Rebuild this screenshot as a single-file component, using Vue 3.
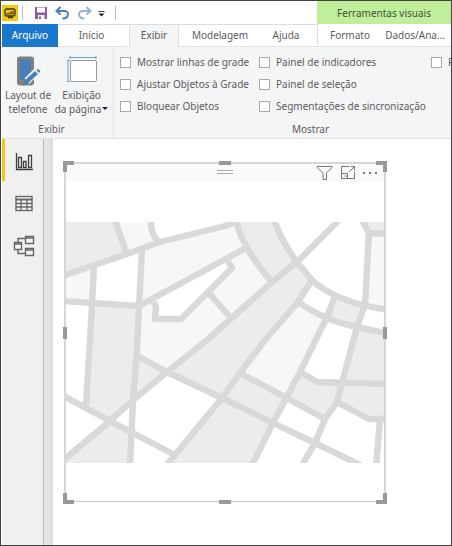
<script setup>
const optionColumns = [
  ['Mostrar linhas de grade', 'Ajustar Objetos à Grade', 'Bloquear Objetos'],
  ['Painel de indicadores', 'Painel de seleção', 'Segmentações de sincronização'],
  ['P'],
]

const darkBlocks = [
  '65,222 115,222 127,254 65,275',
  '92,306 139,306 133,400 110,421 86,405',
  '65,459 110,421 131,432 130,463 65,463',
  '139,357 167,372 133,400',
  '237,222 275,222 284,243 297,262 272,282 255,262 245,247',
  '297,262 312,280 298,302 222,398 167,372',
  '222,398 273,423 253,463 168,463',
  '240,373 287,398 273,423 222,398',
  '300,372 317,382 342,383 337,402 325,418 287,398',
  '335,296 363,306 357,327 327,317',
  '357,327 385,333 385,419 369,419 337,402',
  '363,222 385,222 385,234 369,233',
]

const lightBlocks = [
  '115,222 151,222 159,243 127,254',
  '65,275 94,265 92,304 65,301',
  '142,250 220,226 236,222 245,247 139,306',
  '139,306 154,300 155,319 181,319 232,268 229,257 246,248 272,282 167,372 139,357',
  '369,233 385,234 385,309 365,305',
  '298,302 327,317 300,372 287,398 240,373',
]

const roads = [
  'M60 277L124 255L160 242L225 226L236 222',
  'M114 218L127 254',
  'M151 218V225Q152 235 159 243',
  'M94 265L92 306L86 405',
  'M142 250L139 306L137 350L133 400L130 467',
  'M60 301L139 306L220 262L246 248',
  'M154 302L156 307L155 319L181 319L232 268L228 261',
  'M208 292L229 316',
  'M60 463L110 421L133 400L167 372L207 340L271 283L297 262L341 218',
  'M235 218Q243 250 272 282',
  'M273 218Q283 244 297 262L312 280Q336 303 390 310',
  'M361 218L369 233L390 234',
  'M369 232L365 305L357 327L342 383L337 402L325 419L315 443L301 467',
  'M298 302Q325 321 357 327L390 334',
  'M312 280L298 302L265 340L240 373L222 398L165 467',
  'M335 296L327 317L300 372L273 423L251 467',
  'M139 357L167 372L220 397L273 423L315 443L362 466',
  'M240 373L287 398L325 419',
  'M300 372L317 382L390 384',
  'M337 402L369 419L390 419',
  'M380 419L376 467',
  'M60 394L110 421L173 454',
]

const handles = ['tl', 'tm', 'tr', 'ml', 'mr', 'bl', 'bm', 'br']
</script>

<template>
  <div class="window">
    <header class="titlebar">
      <div class="quick">
        <span class="logo">
          <svg width="16" height="16" viewBox="0 0 16 16" aria-hidden="true">
            <rect x="3" y="4" width="10" height="7" rx="1.500" fill="none" stroke="#3d3517" stroke-width="1.3" />
            <path d="M5 9.5V8M7 9.5V7.5M9 9.5V6.5M11 9.5V6M6 12.500h5" stroke="#3d3517" stroke-width="1.3" />
          </svg>
        </span>
        <span class="rule"></span>
        <button class="tool save" aria-label="Salvar">
          <svg width="14" height="14" viewBox="0 0 14 14">
            <path d="M1 1H13V13H1Z" fill="#8b5bab" />
            <path d="M3 1.500H11V6.500H3ZM4 9H10.500V13H4Z" fill="#fff" />
            <path d="M5 10.500H7V13H5Z" fill="#8b5bab" />
          </svg>
        </button>
        <button class="tool undo" aria-label="Desfazer">
          <svg width="15" height="14" viewBox="0 0 15 14">
            <path d="M5.500 1L1.500 5L5.500 8.500M2 5H9C15 5 14 12.500 7.500 12.500" fill="none" stroke="#4a7fb8" stroke-width="2" />
          </svg>
        </button>
        <button class="tool redo" aria-label="Refazer">
          <svg width="15" height="14" viewBox="0 0 15 14">
            <path d="M9.500 1L13.500 5L9.500 8.500M13 5H6C0 5 1 12.500 7.500 12.500" fill="none" stroke="#9db2cd" stroke-width="2" />
          </svg>
        </button>
        <button class="tool more" aria-label="Personalizar">
          <svg width="7" height="6" viewBox="0 0 7 6">
            <path d="M0.500 .5H6.500" stroke="#444" />
            <path d="M0.500 2.500H6.500L3.500 5.500Z" fill="#222" />
          </svg>
        </button>
        <span class="rule"></span>
      </div>
      <div class="context">Ferramentas visuais</div>
    </header>

    <nav class="tabs">
      <button class="tab file">Arquivo</button>
      <button class="tab home">Início</button>
      <button class="tab active">Exibir</button>
      <button class="tab model">Modelagem</button>
      <button class="tab help">Ajuda</button>
      <div class="context-tabs">
        <button class="tab">Formato</button>
        <button class="tab">Dados/Ana...</button>
      </div>
    </nav>

    <section class="ribbon">
      <div class="group view">
        <div class="commands">
          <button class="command">
            <svg width="26" height="32" viewBox="0 0 26 32" aria-hidden="true">
              <rect x="3.500" y="2" width="14" height="26" rx="1.500" fill="#4a7fb8" stroke="#808080" stroke-width="3" />
              <path d="M3 24H18V28H3Z" fill="#808080" />
              <path d="M9 26H12" stroke="#eee" stroke-width="1.500" />
              <path d="M12 25L23 14" stroke="#f4f5f7" stroke-width="7" />
              <path d="M8 30L9 25L20 15L23 18L12 28Z" fill="#4a7fb8" />
              <path d="M21.500 14L23 13L25.500 15L24 17Z" fill="#4a7fb8" />
            </svg>
            <span>Layout de<br>telefone</span>
          </button>
          <button class="command">
            <svg width="30" height="32" viewBox="0 0 30 32" aria-hidden="true">
              <rect x="3.500" y="4.500" width="26" height="21" rx="1.500" fill="#fff" stroke="#9a9a9a" />
              <path d="M3 1.500H29M3 0V3M29 0V3M1 4V25M0 4.500H3M0 25.500H3" fill="none" stroke="#6d9fd0" />
            </svg>
            <span>Exibição<br>da página<i class="caret"></i></span>
          </button>
        </div>
        <div class="caption">Exibir</div>
      </div>
      <div class="group show">
        <div class="options">
          <div v-for="(column, index) in optionColumns" :key="index" class="option-column">
            <label v-for="option in column" :key="option" class="option">
              <input type="checkbox">
              <span>{{ option }}</span>
            </label>
          </div>
        </div>
        <div class="caption">Mostrar</div>
      </div>
    </section>

    <main class="workspace">
      <aside class="sidebar">
        <button class="mode selected" aria-label="Relatório">
          <svg width="18" height="18" viewBox="0 0 18 18">
            <path d="M1.500 0V16.500H18" fill="none" stroke="#404040" stroke-width="1.300" />
            <path d="M3.500 4.500H6.500V14.500H3.500ZM8.500 8.500H11V14.500H8.500ZM13.500 2.500H16.500V14.500H13.500Z" fill="none" stroke="#404040" stroke-width="1.300" />
          </svg>
        </button>
        <button class="mode" aria-label="Dados">
          <svg width="18" height="18" viewBox="0 0 18 18">
            <rect x="1" y="1.500" width="16" height="14" fill="#fff" stroke="#666" stroke-width="1.400" />
            <path d="M1 4.500H17" stroke="#666" stroke-width="2" />
            <path d="M1 8.500H17M1 12H17M6 4V16M12 4V16" stroke="#666" stroke-width="1.300" />
          </svg>
        </button>
        <button class="mode" aria-label="Modelo">
          <svg width="22" height="22" viewBox="0 0 22 22">
            <path d="M5 7V3.500H12M5 14V18.500H12" fill="none" stroke="#666" stroke-width="1.400" />
            <path d="M1.500 7.500H8.500V14.500H1.500ZM12.500 1.500H20.500V8.500H12.500ZM12.500 13.500H20.500V20.500H12.500Z" fill="#f8f7f5" stroke="#666" stroke-width="1.400" />
            <path d="M1 9H9M12 3H21M12 15H21" stroke="#666" stroke-width="1.500" />
          </svg>
        </button>
      </aside>
      <div class="gutter"></div>
      <div class="canvas">
        <article class="visual">
          <div class="visual-bar">
            <span class="grip"></span>
            <div class="visual-tools">
              <button class="tool" aria-label="Filtros">
                <svg width="17" height="16" viewBox="0 0 17 16">
                  <path d="M1 2.500H16V3.500L10.500 9V15.500H7V9L1 3.500Z" fill="none" stroke="#777" />
                </svg>
              </button>
              <button class="tool" aria-label="Modo de foco">
                <svg width="16" height="16" viewBox="0 0 16 16">
                  <path d="M9 2.500H1.500V14.500H14.500V8M1.500 9.500H7.500V14.500M4.500 12H7.500M9 8L14 3M10.500 2.500H14.500V6.500" fill="none" stroke="#777" />
                </svg>
              </button>
              <button class="tool" aria-label="Mais opções">
                <svg width="16" height="16" viewBox="0 0 16 16">
                  <path d="M0 8H2V10H0ZM6 8H8V10H6ZM12 8H14V10H12Z" fill="#777" />
                </svg>
              </button>
            </div>
          </div>
          <svg class="map" viewBox="66 222 318 241" role="img" aria-label="Mapa">
            <polygon v-for="points in darkBlocks" :key="points" :points="points" fill="#ececec" />
            <polygon v-for="points in lightBlocks" :key="points" :points="points" fill="#f7f7f7" />
            <path v-for="d in roads" :key="d" :d="d" fill="none" stroke="#d9d9d9" stroke-width="6.400" stroke-linejoin="round" />
          </svg>
          <span v-for="handle in handles" :key="handle" class="handle" :class="handle"></span>
        </article>
      </div>
    </main>
  </div>
</template>

<style>
body {
  margin: 0;
}
</style>

<style scoped>
.window {
  box-sizing: border-box;
  min-height: 100vh;
  display: flex;
  flex-direction: column;
  overflow: hidden;
  border: 1px solid #444;
  background: #fff;
  color: #5c5c5c;
  font-family: "Noto Sans", "Open Sans", sans-serif;
  font-size: 10px;
  line-height: 14px;
}

button {
  margin: 0;
  padding: 0;
  border: 0;
  background: none;
  color: inherit;
  font: inherit;
  white-space: nowrap;
}

svg {
  display: block;
  flex: none;
}

.titlebar {
  display: flex;
  justify-content: space-between;
  height: 23px;
}

.quick {
  display: flex;
  align-items: center;
  padding-left: 1px;
}

.logo {
  margin-right: 4px;
  background: #f2c811;
}

.rule {
  width: 1px;
  height: 14px;
  background: #bbb;
}

.save {
  margin-left: 11px;
}

.undo,
.redo {
  margin-left: 7px;
}

.more {
  margin: 3px 10px 0 6px;
}

.context {
  box-sizing: border-box;
  width: 134px;
  padding-top: 5px;
  background: #c0ee9b;
  color: #40543a;
  text-align: center;
}

.tabs {
  display: flex;
  height: 23px;
  padding-left: 1px;
}

.tab {
  box-sizing: border-box;
  padding-bottom: 1px;
  border-top: 1px solid #ddd;
  border-bottom: 1px solid #e3e4e6;
}

.file {
  width: 56px;
  border-color: #1a78cc;
  background: #1a78cc;
  color: #fff;
}

.home {
  width: 71px;
  padding-right: 4px;
}

.active {
  width: 50px;
  border: 1px solid #ddd;
  border-bottom-color: #f4f5f7;
  background: #f4f5f7;
}

.model {
  width: 82px;
}

.help {
  flex: 1;
  padding-right: 6px;
}

.context-tabs {
  box-sizing: border-box;
  display: flex;
  justify-content: space-between;
  width: 134px;
  padding: 0 6px 0 12px;
  border-bottom: 1px solid #e3e4e6;
  border-left: 1px solid #ddd;
}

.context-tabs .tab {
  border: 0;
}

.ribbon {
  display: flex;
  height: 92px;
  box-sizing: border-box;
  margin-left: 1px;
  border-bottom: 1px solid #dfe0e2;
  background: #f4f5f7;
}

.group {
  display: flex;
  flex-direction: column;
  justify-content: space-between;
  padding: 9px 0 1px;
}

.view {
  flex: none;
  width: 111px;
  border-right: 1px solid #e4e5e7;
}

.show {
  flex: 1;
  min-width: 0;
  padding-top: 8px;
}

.commands {
  display: grid;
  grid-template-columns: 52px 55px;
}

.command {
  display: flex;
  flex-direction: column;
  align-items: center;
}

.view .caption {
  padding-right: 12px;
}

.caret {
  display: inline-block;
  margin-left: 1px;
  border: 3px solid transparent;
  border-top-color: #222;
  border-bottom: 0;
  vertical-align: 3px;
}

.caption {
  padding-bottom: 1px;
  text-align: center;
}

.show .caption {
  padding-left: 56px;
}

.options {
  display: flex;
  padding-left: 6px;
}

.option-column {
  display: flex;
  flex: none;
  flex-direction: column;
  gap: 8px;
  width: 139px;
}

.option-column:nth-child(2) {
  width: 172px;
}

.option {
  display: flex;
  align-items: center;
  gap: 6px;
  white-space: nowrap;
}

input {
  box-sizing: border-box;
  flex: none;
  width: 11px;
  height: 11px;
  margin: 0;
  border: 1px solid #aaa;
  background: #fff;
  appearance: none;
}

.workspace {
  display: flex;
  flex: 1;
  padding-left: 1px;
}

.sidebar {
  width: 41px;
  border-right: 1px solid #bbb;
  background: #f2f0ee;
}

.mode {
  box-sizing: border-box;
  display: flex;
  align-items: center;
  justify-content: center;
  width: 100%;
  height: 42px;
  padding: 3px 0 0 3px;
}

.selected {
  padding-left: 0;
  border-left: 3px solid #f2c811;
}

.gutter {
  width: 9px;
  background: linear-gradient(90deg, #e8e8e8, #dcdcdc);
}

.canvas {
  flex: 1;
  padding: 23px 65px 43px 11px;
}

.visual {
  position: relative;
  padding-bottom: 38px;
  border: 2px solid #d6d6d6;
  border-bottom: 1px solid #c8c8c8;
}

.visual-bar {
  display: grid;
  grid-template-columns: 1fr auto 1fr;
  height: 18px;
  margin-bottom: 40px;
  background: #fafafa;
}

.grip {
  grid-column: 2;
  width: 16px;
  height: 2px;
  margin-top: 6px;
  border-top: 1px solid #aaa;
  border-bottom: 1px solid #aaa;
}

.visual-tools {
  display: flex;
  align-items: flex-start;
  justify-content: flex-end;
  gap: 7px;
  padding-right: 5px;
}

.map {
  width: 100%;
  height: auto;
}

.handle {
  position: absolute;
  box-sizing: border-box;
  width: 11px;
  height: 11px;
  border: 0 solid #999;
}

.tl {
  top: -3px;
  left: -3px;
  border-width: 4px 0 0 4px;
}

.tr {
  top: -3px;
  right: -3px;
  border-width: 4px 4px 0 0;
}

.bl {
  bottom: -3px;
  left: -3px;
  border-width: 0 0 4px 4px;
}

.br {
  right: -3px;
  bottom: -3px;
  border-width: 0 4px 4px 0;
}

.tm,
.bm {
  left: calc(50% - 6px);
  width: 12px;
  height: 4px;
  background: #999;
}

.tm {
  top: -3px;
}

.bm {
  bottom: -3px;
}

.ml,
.mr {
  top: calc(50% - 6px);
  width: 4px;
  height: 12px;
  background: #999;
}

.ml {
  left: -3px;
}

.mr {
  right: -3px;
}
</style>
